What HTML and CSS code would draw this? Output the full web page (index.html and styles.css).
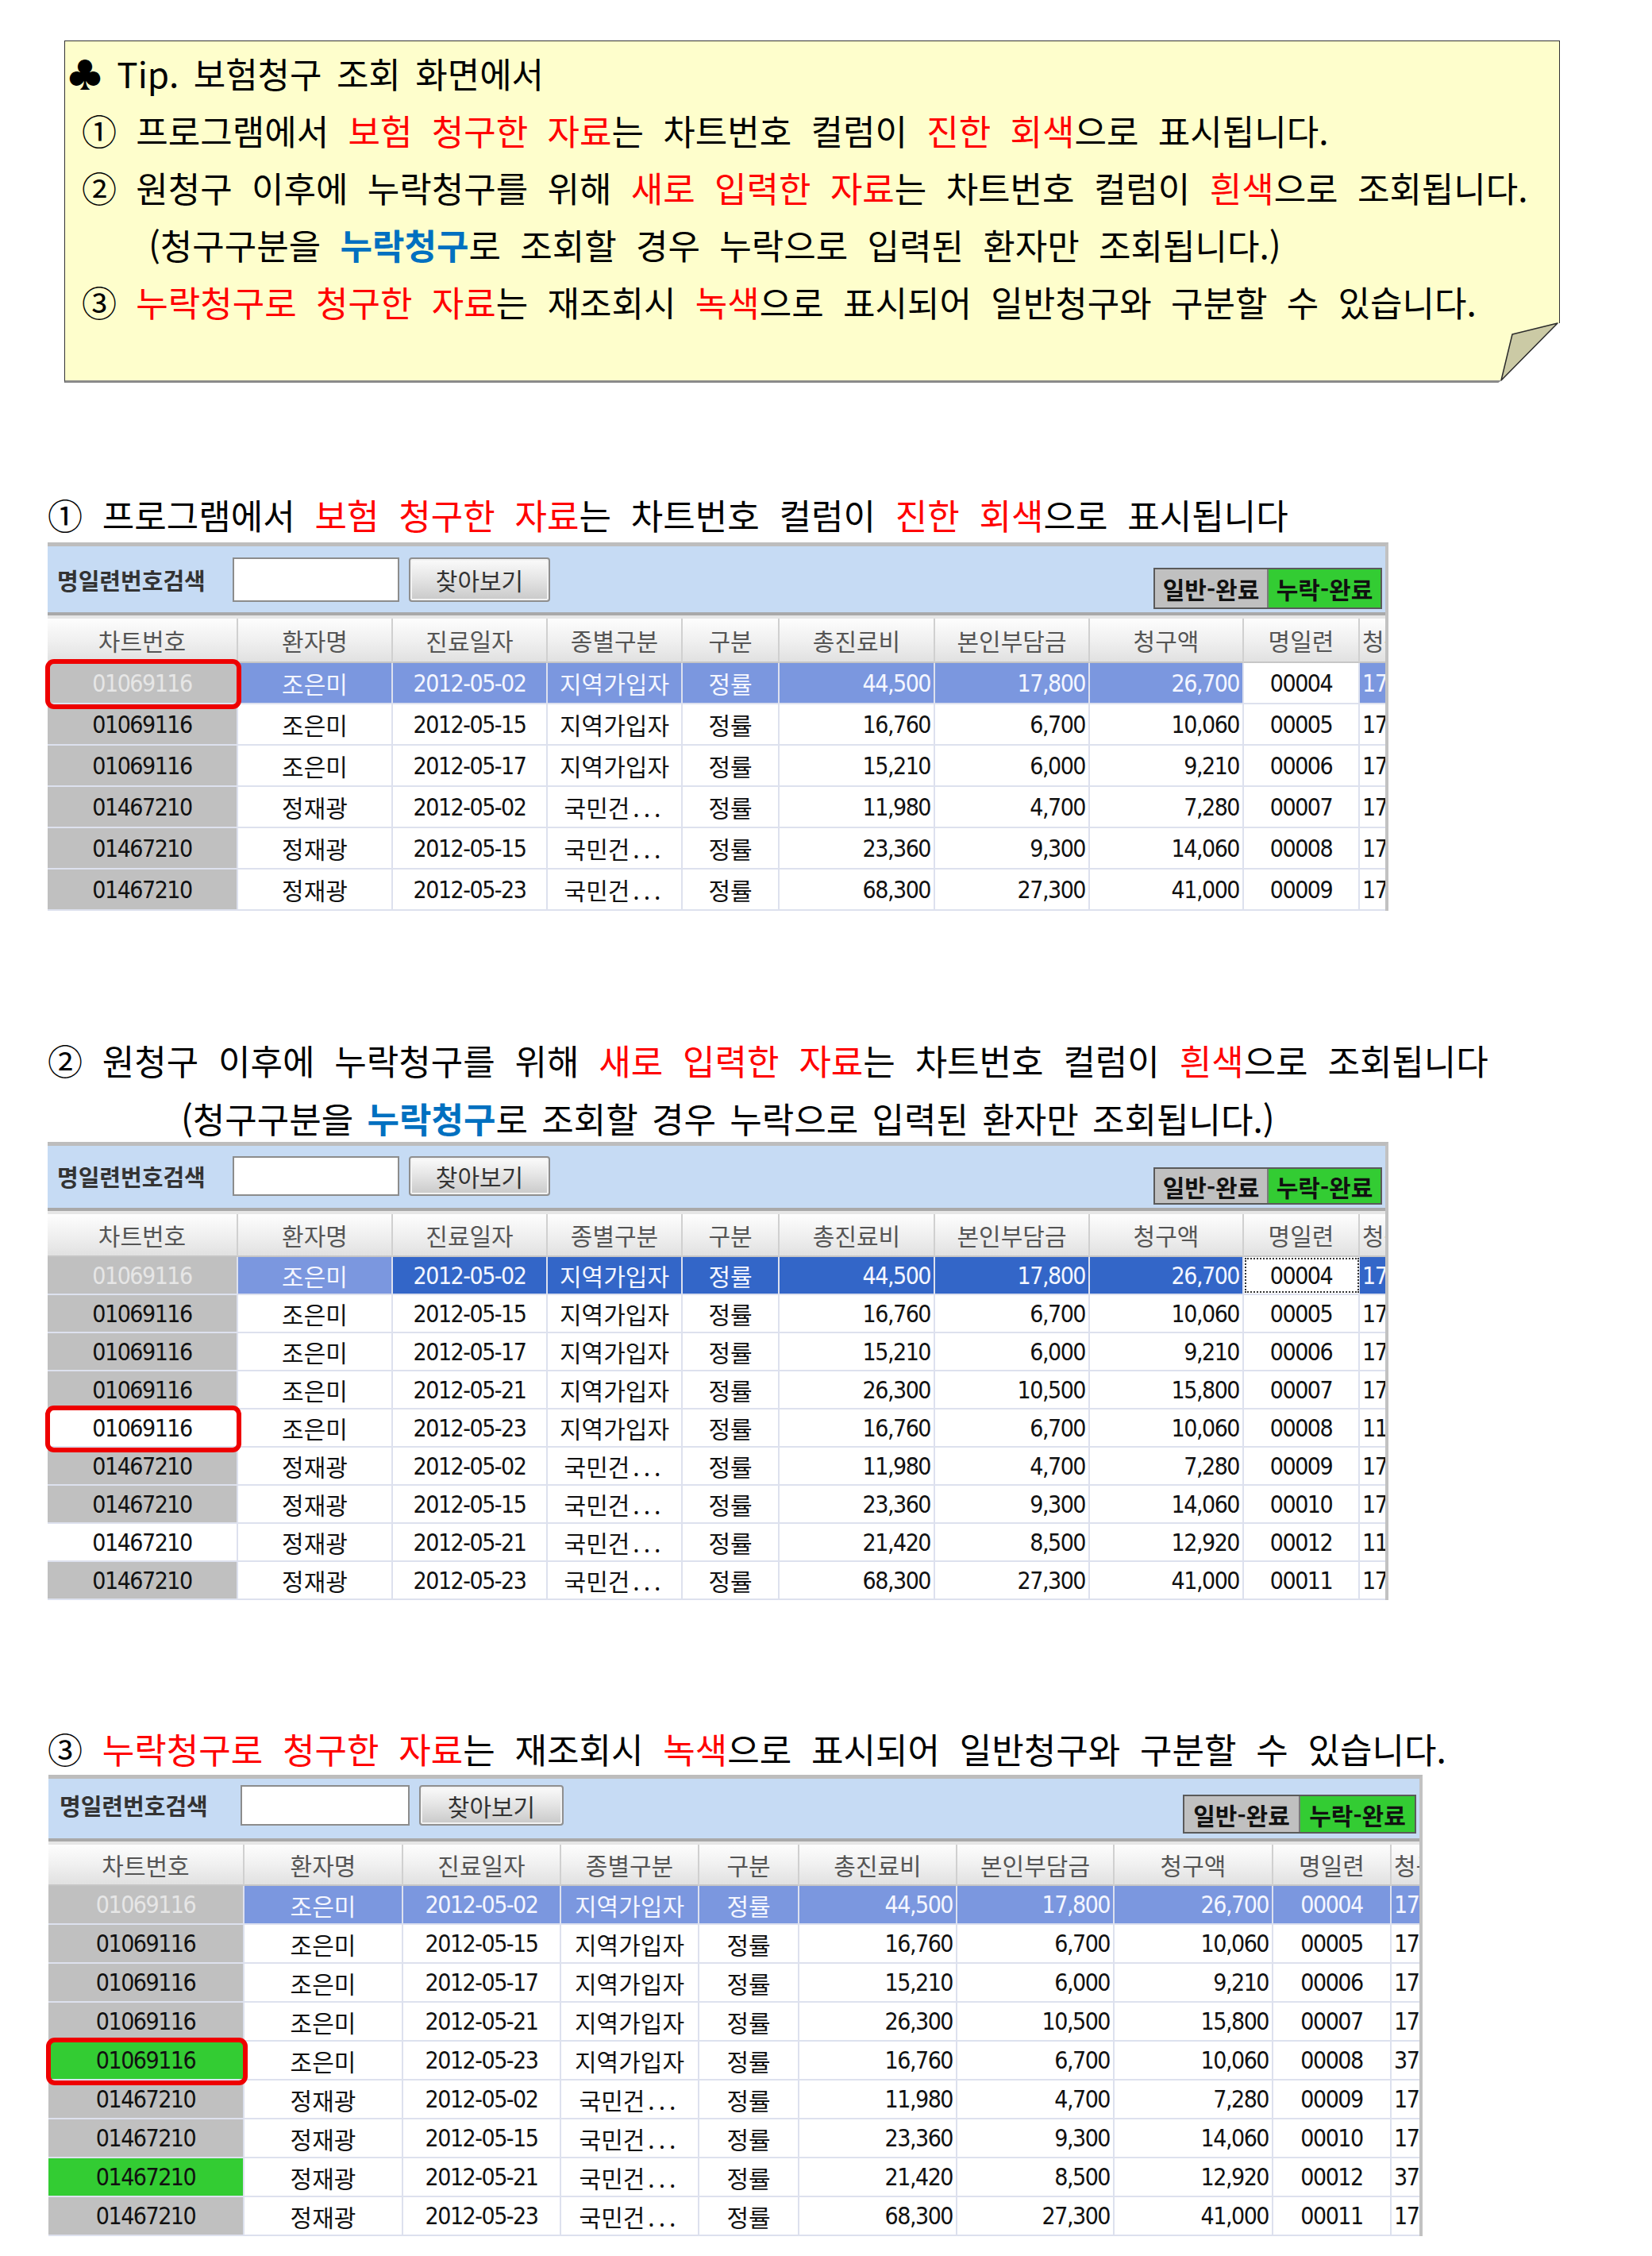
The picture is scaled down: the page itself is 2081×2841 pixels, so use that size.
FILE: index.html
```html
<!DOCTYPE html>
<html lang="ko">
<head>
  <meta charset="UTF-8" />
  <meta name="viewport" content="width=device-width, initial-scale=1.0" />
  <title>보험청구 조회 - 누락청구 안내</title>
  <link rel="stylesheet" href="styles.css">
</head>
<body>
  <div class="page">

    <div class="note">
      <p class="tip">♣ Tip. 보험청구 조회 화면에서</p>
      <p class="item">① 프로그램에서 <span class="red">보험 청구한 자료</span>는 차트번호 컬럼이 <span class="red">진한 회색</span>으로 표시됩니다.</p>
      <p class="item">② 원청구 이후에 누락청구를 위해 <span class="red">새로 입력한 자료</span>는 차트번호 컬럼이 <span class="red">흰색</span>으로 조회됩니다.</p>
      <p class="item sub">(청구구분을 <span class="blue">누락청구</span>로 조회할 경우 누락으로 입력된 환자만 조회됩니다.)</p>
      <p class="item">③ <span class="red">누락청구로 청구한 자료</span>는 재조회시 <span class="red">녹색</span>으로 표시되어 일반청구와 구분할 수 있습니다.</p>
      <svg class="fold" width="80" height="80" viewBox="0 0 80 80">
        <polygon points="76,4 80,4 80,80 0,80 4,77" fill="#fff" />
        <polygon points="76,4 19,18 5,76" fill="#cbcaa5" stroke="#2b2b2b" stroke-width="1.5" stroke-linejoin="round" />
      </svg>
    </div>

    <!-- 1. 청구 완료 자료 -->
    <p class="heading first">① 프로그램에서 <span class="red">보험 청구한 자료</span>는 차트번호 컬럼이 <span class="red">진한 회색</span>으로 표시됩니다</p>
    <div class="grid grid-a">
      <div class="toolbar">
        <span class="label">명일련번호검색</span>
        <input class="query" type="text" />
        <button class="find">찾아보기</button>
        <div class="legend"><span class="done">일반-완료</span><span class="late">누락-완료</span></div>
      </div>
      <div class="head">
        <span class="h">차트번호</span><span class="h">환자명</span><span class="h">진료일자</span><span class="h">종별구분</span><span class="h">구분</span>
        <span class="h">총진료비</span><span class="h">본인부담금</span><span class="h">청구액</span><span class="h">명일련</span><span class="h tail">청구</span>
      </div>
      <div class="row sel1 mark"><span class="c chart">01069116</span><span class="c k">조은미</span><span class="c">2012-05-02</span><span class="c k">지역가입자</span><span class="c k">정률</span><span class="c num">44,500</span><span class="c num">17,800</span><span class="c num">26,700</span><span class="c">00004</span><span class="c tail">17</span></div>
      <div class="row"><span class="c chart">01069116</span><span class="c k">조은미</span><span class="c">2012-05-15</span><span class="c k">지역가입자</span><span class="c k">정률</span><span class="c num">16,760</span><span class="c num">6,700</span><span class="c num">10,060</span><span class="c">00005</span><span class="c tail">17</span></div>
      <div class="row"><span class="c chart">01069116</span><span class="c k">조은미</span><span class="c">2012-05-17</span><span class="c k">지역가입자</span><span class="c k">정률</span><span class="c num">15,210</span><span class="c num">6,000</span><span class="c num">9,210</span><span class="c">00006</span><span class="c tail">17</span></div>
      <div class="row"><span class="c chart">01467210</span><span class="c k">정재광</span><span class="c">2012-05-02</span><span class="c k">국민건<span class="dots">...</span></span><span class="c k">정률</span><span class="c num">11,980</span><span class="c num">4,700</span><span class="c num">7,280</span><span class="c">00007</span><span class="c tail">17</span></div>
      <div class="row"><span class="c chart">01467210</span><span class="c k">정재광</span><span class="c">2012-05-15</span><span class="c k">국민건<span class="dots">...</span></span><span class="c k">정률</span><span class="c num">23,360</span><span class="c num">9,300</span><span class="c num">14,060</span><span class="c">00008</span><span class="c tail">17</span></div>
      <div class="row"><span class="c chart">01467210</span><span class="c k">정재광</span><span class="c">2012-05-23</span><span class="c k">국민건<span class="dots">...</span></span><span class="c k">정률</span><span class="c num">68,300</span><span class="c num">27,300</span><span class="c num">41,000</span><span class="c">00009</span><span class="c tail">17</span></div>
    </div>

    <!-- 2. 누락분 새로 입력 -->
    <p class="heading second">② 원청구 이후에 누락청구를 위해 <span class="red">새로 입력한 자료</span>는 차트번호 컬럼이 <span class="red">흰색</span>으로 조회됩니다</p>
    <p class="heading sub">(청구구분을 <span class="blue">누락청구</span>로 조회할 경우 누락으로 입력된 환자만 조회됩니다.)</p>
    <div class="grid grid-b">
      <div class="toolbar">
        <span class="label">명일련번호검색</span>
        <input class="query" type="text" />
        <button class="find">찾아보기</button>
        <div class="legend"><span class="done">일반-완료</span><span class="late">누락-완료</span></div>
      </div>
      <div class="head">
        <span class="h">차트번호</span><span class="h">환자명</span><span class="h">진료일자</span><span class="h">종별구분</span><span class="h">구분</span>
        <span class="h">총진료비</span><span class="h">본인부담금</span><span class="h">청구액</span><span class="h">명일련</span><span class="h tail">청구</span>
      </div>
      <div class="row sel2"><span class="c chart">01069116</span><span class="c k">조은미</span><span class="c">2012-05-02</span><span class="c k">지역가입자</span><span class="c k">정률</span><span class="c num">44,500</span><span class="c num">17,800</span><span class="c num">26,700</span><span class="c">00004</span><span class="c tail">17</span></div>
      <div class="row"><span class="c chart">01069116</span><span class="c k">조은미</span><span class="c">2012-05-15</span><span class="c k">지역가입자</span><span class="c k">정률</span><span class="c num">16,760</span><span class="c num">6,700</span><span class="c num">10,060</span><span class="c">00005</span><span class="c tail">17</span></div>
      <div class="row"><span class="c chart">01069116</span><span class="c k">조은미</span><span class="c">2012-05-17</span><span class="c k">지역가입자</span><span class="c k">정률</span><span class="c num">15,210</span><span class="c num">6,000</span><span class="c num">9,210</span><span class="c">00006</span><span class="c tail">17</span></div>
      <div class="row"><span class="c chart">01069116</span><span class="c k">조은미</span><span class="c">2012-05-21</span><span class="c k">지역가입자</span><span class="c k">정률</span><span class="c num">26,300</span><span class="c num">10,500</span><span class="c num">15,800</span><span class="c">00007</span><span class="c tail">17</span></div>
      <div class="row new mark"><span class="c chart">01069116</span><span class="c k">조은미</span><span class="c">2012-05-23</span><span class="c k">지역가입자</span><span class="c k">정률</span><span class="c num">16,760</span><span class="c num">6,700</span><span class="c num">10,060</span><span class="c">00008</span><span class="c tail">11</span></div>
      <div class="row"><span class="c chart">01467210</span><span class="c k">정재광</span><span class="c">2012-05-02</span><span class="c k">국민건<span class="dots">...</span></span><span class="c k">정률</span><span class="c num">11,980</span><span class="c num">4,700</span><span class="c num">7,280</span><span class="c">00009</span><span class="c tail">17</span></div>
      <div class="row"><span class="c chart">01467210</span><span class="c k">정재광</span><span class="c">2012-05-15</span><span class="c k">국민건<span class="dots">...</span></span><span class="c k">정률</span><span class="c num">23,360</span><span class="c num">9,300</span><span class="c num">14,060</span><span class="c">00010</span><span class="c tail">17</span></div>
      <div class="row new"><span class="c chart">01467210</span><span class="c k">정재광</span><span class="c">2012-05-21</span><span class="c k">국민건<span class="dots">...</span></span><span class="c k">정률</span><span class="c num">21,420</span><span class="c num">8,500</span><span class="c num">12,920</span><span class="c">00012</span><span class="c tail">11</span></div>
      <div class="row"><span class="c chart">01467210</span><span class="c k">정재광</span><span class="c">2012-05-23</span><span class="c k">국민건<span class="dots">...</span></span><span class="c k">정률</span><span class="c num">68,300</span><span class="c num">27,300</span><span class="c num">41,000</span><span class="c">00011</span><span class="c tail">17</span></div>
    </div>

    <!-- 3. 누락청구 완료 -->
    <p class="heading third">③ <span class="red">누락청구로 청구한 자료</span>는 재조회시 <span class="red">녹색</span>으로 표시되어 일반청구와 구분할 수 있습니다.</p>
    <div class="grid grid-c">
      <div class="toolbar">
        <span class="label">명일련번호검색</span>
        <input class="query" type="text" />
        <button class="find">찾아보기</button>
        <div class="legend"><span class="done">일반-완료</span><span class="late">누락-완료</span></div>
      </div>
      <div class="head">
        <span class="h">차트번호</span><span class="h">환자명</span><span class="h">진료일자</span><span class="h">종별구분</span><span class="h">구분</span>
        <span class="h">총진료비</span><span class="h">본인부담금</span><span class="h">청구액</span><span class="h">명일련</span><span class="h tail">청구</span>
      </div>
      <div class="row sel3"><span class="c chart">01069116</span><span class="c k">조은미</span><span class="c">2012-05-02</span><span class="c k">지역가입자</span><span class="c k">정률</span><span class="c num">44,500</span><span class="c num">17,800</span><span class="c num">26,700</span><span class="c">00004</span><span class="c tail">17</span></div>
      <div class="row"><span class="c chart">01069116</span><span class="c k">조은미</span><span class="c">2012-05-15</span><span class="c k">지역가입자</span><span class="c k">정률</span><span class="c num">16,760</span><span class="c num">6,700</span><span class="c num">10,060</span><span class="c">00005</span><span class="c tail">17</span></div>
      <div class="row"><span class="c chart">01069116</span><span class="c k">조은미</span><span class="c">2012-05-17</span><span class="c k">지역가입자</span><span class="c k">정률</span><span class="c num">15,210</span><span class="c num">6,000</span><span class="c num">9,210</span><span class="c">00006</span><span class="c tail">17</span></div>
      <div class="row"><span class="c chart">01069116</span><span class="c k">조은미</span><span class="c">2012-05-21</span><span class="c k">지역가입자</span><span class="c k">정률</span><span class="c num">26,300</span><span class="c num">10,500</span><span class="c num">15,800</span><span class="c">00007</span><span class="c tail">17</span></div>
      <div class="row late mark"><span class="c chart">01069116</span><span class="c k">조은미</span><span class="c">2012-05-23</span><span class="c k">지역가입자</span><span class="c k">정률</span><span class="c num">16,760</span><span class="c num">6,700</span><span class="c num">10,060</span><span class="c">00008</span><span class="c tail">37</span></div>
      <div class="row"><span class="c chart">01467210</span><span class="c k">정재광</span><span class="c">2012-05-02</span><span class="c k">국민건<span class="dots">...</span></span><span class="c k">정률</span><span class="c num">11,980</span><span class="c num">4,700</span><span class="c num">7,280</span><span class="c">00009</span><span class="c tail">17</span></div>
      <div class="row"><span class="c chart">01467210</span><span class="c k">정재광</span><span class="c">2012-05-15</span><span class="c k">국민건<span class="dots">...</span></span><span class="c k">정률</span><span class="c num">23,360</span><span class="c num">9,300</span><span class="c num">14,060</span><span class="c">00010</span><span class="c tail">17</span></div>
      <div class="row late"><span class="c chart">01467210</span><span class="c k">정재광</span><span class="c">2012-05-21</span><span class="c k">국민건<span class="dots">...</span></span><span class="c k">정률</span><span class="c num">21,420</span><span class="c num">8,500</span><span class="c num">12,920</span><span class="c">00012</span><span class="c tail">37</span></div>
      <div class="row"><span class="c chart">01467210</span><span class="c k">정재광</span><span class="c">2012-05-23</span><span class="c k">국민건<span class="dots">...</span></span><span class="c k">정률</span><span class="c num">68,300</span><span class="c num">27,300</span><span class="c num">41,000</span><span class="c">00011</span><span class="c tail">17</span></div>
    </div>

  </div>
</body>
</html>
```

FILE: styles.css
```css
body {
  margin: 0;
  background: #fff;
  color: #000;
  font-family: "Noto Sans CJK KR", "Noto Sans", sans-serif;
}
p {
  margin: 0;
}
.page {
  padding: 51px 0 40px 60px;
}
.red {
  color: #ff0000;
}
.blue {
  color: #0070c0;
  font-weight: bold;
}

/* sticky note */
.note {
  position: relative;
  width: 1884px;
  height: 431px;
  margin-left: 21px;
  padding: 4px 0 0 3px;
  box-sizing: border-box;
  background: #fefecc;
  border: 1px solid #333;
  border-bottom: 3px solid #8a8a8a;
  font-size: 44px;
  line-height: 72px;
  word-spacing: 12px;
  white-space: nowrap;
}
.note .tip {
  word-spacing: 6px;
}
.note .item {
  padding-left: 18px;
}
.note .sub {
  padding-left: 102px;
}
.fold {
  position: absolute;
  right: -2px;
  bottom: -4px;
}

/* section titles */
.heading {
  font-size: 44px;
  line-height: 60px;
  word-spacing: 12.5px;
  white-space: nowrap;
}
.heading.first {
  margin: 136px 0 5px;
}
.heading.second {
  margin-top: 158px;
}
.heading.sub {
  margin-top: 13px;
  padding-left: 168px;
  word-spacing: 5px;
}
.heading.third {
  margin: 157px 0 3px;
}

/* grid window */
.grid {
  --cols: 240px 195px 195px 170px 122px 196px 195px 194px 146px 1fr;
  --row-h: 48px;
  --head-h: 54px;
  --bar-h: 82px;
  --bar-pad: 13px;
  --bar-left: 12px;
  --ctl-h: 50px;
  --legend-h: 43px;
  --legend-gap: 4px;
  --legend-w: 141px;
  --label-w: 221px;
  --query-w: 210px;
  --find-w: 178px;
  width: 1689px;
  box-sizing: border-box;
  background: #e6e6e6;
  border-top: 5px solid #bdbdbd;
  border-right: 4px solid #c2c2c2;
}
.grid-a {
  --row-h: 52px;
  --head-h: 56px;
  --bar-h: 87px;
  --bar-pad: 14px;
  --ctl-h: 56px;
  --legend-h: 48px;
  --legend-gap: 4px;
}
.grid-c {
  --cols: 247px 200px 199px 174px 126px 199px 198px 200px 149px 1fr;
  --row-h: 49px;
  --head-h: 52px;
  --bar-h: 79px;
  --bar-pad: 8px;
  --bar-left: 14px;
  --ctl-h: 51px;
  --legend-h: 45px;
  --legend-gap: 6px;
  --legend-w: 144px;
  --label-w: 228px;
  --query-w: 213px;
  --find-w: 182px;
  width: 1731px;
  margin-left: 1px;
}

.toolbar {
  display: flex;
  align-items: flex-start;
  height: var(--bar-h);
  box-sizing: border-box;
  padding: var(--bar-pad) 4px var(--legend-gap) var(--bar-left);
  background: #c6dbf4;
  border-bottom: 4px solid #a9a9a9;
  font-size: 30px;
}
.label {
  width: var(--label-w);
  line-height: var(--ctl-h);
  font-size: 29px;
  font-weight: bold;
  color: #333;
}
.query {
  width: var(--query-w);
  height: var(--ctl-h);
  box-sizing: border-box;
  margin: 0 12px 0 0;
  border: 2px solid #8c8c8c;
  background: #fff;
}
.find {
  width: var(--find-w);
  height: var(--ctl-h);
  padding: 0;
  border: 2px solid #8f8f8f;
  border-radius: 4px;
  background: linear-gradient(#fbfbfb, #e6e6e6 45%, #c9c9c9);
  box-shadow: inset 0 0 0 2px #f2f2f2;
  font-family: inherit;
  font-size: 30px;
  color: #333;
}
.legend {
  display: flex;
  align-self: flex-end;
  margin-left: auto;
  border: 2px solid #5a5a5a;
}
.legend span {
  display: flex;
  align-items: center;
  justify-content: center;
  width: var(--legend-w);
  height: var(--legend-h);
  font-weight: bold;
  color: #111;
}
.legend .done {
  background: #c0c0c0;
  border-right: 2px solid #7a7a7a;
}
.legend .late {
  background: #33cc33;
}

.head {
  display: grid;
  grid-template-columns: var(--cols);
  height: var(--head-h);
  margin-top: 4px;
}
.h {
  display: flex;
  align-items: center;
  justify-content: center;
  overflow: hidden;
  white-space: nowrap;
  background: linear-gradient(#fdfdfd, #efefef 55%, #e1e1e1);
  border-right: 2px solid #d0d0d0;
  border-bottom: 2px solid #c6c6c6;
  font-size: 30px;
  color: #555;
}

.row {
  display: grid;
  grid-template-columns: var(--cols);
  height: var(--row-h);
  box-sizing: border-box;
  background: #fff;
  border-bottom: 2px solid #dde1ee;
}
.c {
  display: flex;
  align-items: center;
  justify-content: center;
  overflow: hidden;
  white-space: nowrap;
  border-right: 2px solid #dde1ee;
  font-family: "DejaVu Sans Condensed", "Noto Sans CJK KR", sans-serif;
  font-size: 30px;
  letter-spacing: -1.5px;
  color: #111;
}
.c.k {
  font-family: "Noto Sans CJK KR", sans-serif;
  font-size: 30px;
  letter-spacing: 0;
}
.dots {
  letter-spacing: 5px;
  margin-left: 4px;
}
.c.num {
  justify-content: flex-end;
  padding-right: 4px;
}
.tail {
  justify-content: flex-start;
  padding-left: 3px;
  border-right: 0;
}

/* chart number column states */
.chart {
  position: relative;
  overflow: visible;
  background: #c0c0c0;
}
.new .chart {
  background: #fff;
}
.late .chart {
  background: #33cc33;
}
.mark .chart::after {
  content: "";
  position: absolute;
  z-index: 2;
  top: -5px;
  right: -6px;
  bottom: -8px;
  left: -3px;
  border: 6px solid #ee0000;
  border-radius: 11px;
}

/* selected row */
.sel1 .chart,
.sel2 .chart,
.sel3 .chart {
  color: #e6e6e6;
}
.sel1 .c:not(.chart),
.sel3 .c:not(.chart),
.sel2 .c:nth-child(2) {
  background: #7b97df;
  color: #f4f6ff;
}
.sel2 .c:nth-child(n+3) {
  background: #3366c8;
  color: #f4f6ff;
}
.sel1 .c:nth-child(9) {
  background: #fff;
  color: #111;
}
.sel2 .c:nth-child(9) {
  background: #fff;
  color: #111;
  outline: 2px dotted #333;
  outline-offset: -3px;
}
```
